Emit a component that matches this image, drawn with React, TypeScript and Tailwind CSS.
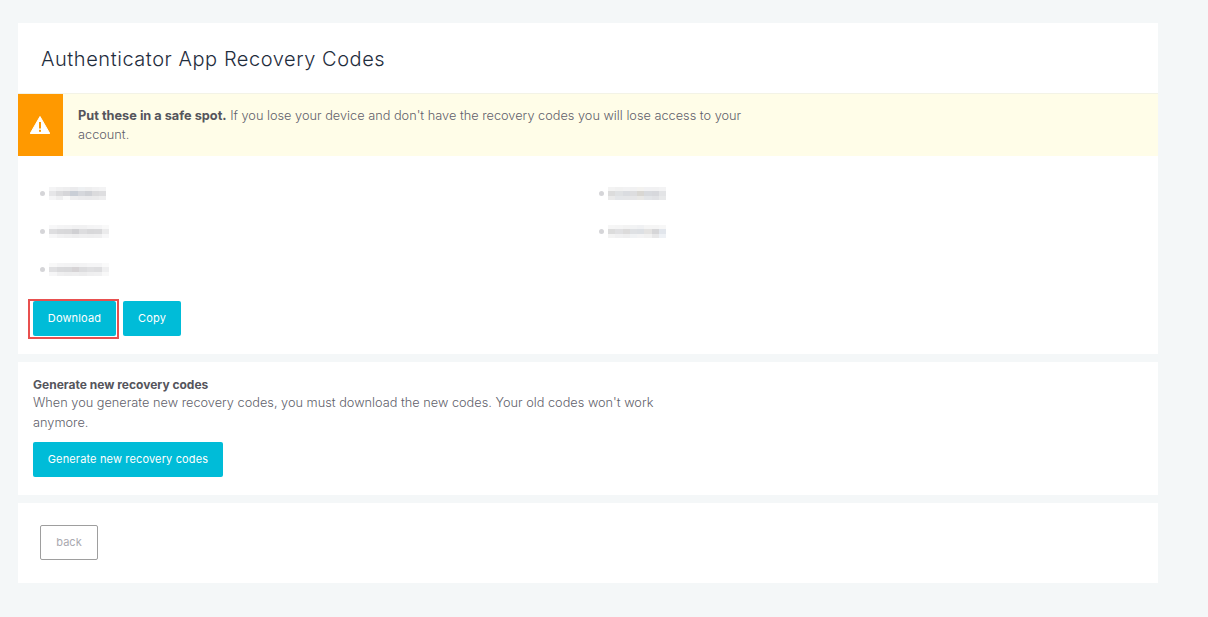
import React from 'react';

// blurred codes from the screenshot: each one is a strip of grey cells
type Code = { top: string[]; mid: string[]; bot: string[] };

const leftCodes: Code[] = [
    { top: ['#f4f4f5', '#f0f0f1', '#eeeeef', '#ebebed', '#eef0f2', '#eeeeef', '#f1f1f2', '#f3f3f4'], mid: ['#e6e6e8', '#dcdcde', '#d6d6d9', '#c9ced6', '#d5d7dc', '#cfd1d6', '#dbdbdd', '#dedee0'], bot: ['#f5f5f6', '#efeff0', '#fafafa', '#eeeeef', '#ebebed', '#eaeaec', '#ebebec', '#eeeeef'] },
    { top: ['#f7f7f8', '#f4f4f5', '#f3f3f4', '#f1f1f2', '#f1f1f2', '#f4f4f5', '#f5f5f6', '#f9f9f9'], mid: ['#dedee0', '#d9d9db', '#d8d8da', '#d0d0d3', '#dddddf', '#d8d8da', '#d9d9db', '#ebebec'], bot: ['#f6f6f7', '#f1f1f2', '#efeff0', '#ededee', '#efeff0', '#eeeeef', '#efeff0', '#f7f7f8'] },
    { top: ['#f8f8f8', '#f4f4f5', '#f3f3f4', '#f2f2f3', '#f3f3f4', '#f5f5f6', '#f5f5f6', '#fafafa'], mid: ['#e0e0e2', '#dadadc', '#d9d9db', '#d6d3d5', '#dcdcde', '#e0e0e2', '#dedee0', '#efeff0'], bot: ['#f6f6f7', '#efeff0', '#ededee', '#eeeeef', '#ececed', '#efeff0', '#f0f0f1', '#f8f8f8'] },
];

const rightCodes: Code[] = [
    { top: ['#f3f3f3', '#f1f1f1', '#f2f2f3', '#f1f1f2', '#f3f2f0', '#f1f1f3', '#f1f1f2', '#f3f3f4'], mid: ['#dcdcdc', '#dfe1e3', '#dadce0', '#dddddf', '#d9d7d3', '#d8dade', '#d7d8dc', '#e3e4e6'], bot: ['#eaeaea', '#e4e6e9', '#e5e6e8', '#e6e6e8', '#e9e8e6', '#e3e5e8', '#e1e2e5', '#e8e9ea'] },
    { top: ['#f6f6f6', '#f5f5f5', '#f3f3f3', '#f2f3f4', '#f0f1f3', '#f5f5f5', '#f5f5f5', '#f7f7f7'], mid: ['#dcdcdc', '#e0e0e2', '#dcdbdb', '#dfe1e4', '#dde0e4', '#e4e3e2', '#d6d6d8', '#e2e6ec'], bot: ['#f3f3f3', '#f0f0f1', '#eeeeef', '#f0f2f4', '#f3f3f4', '#f1f1f1', '#e7e7e8', '#eef1f5'] },
];

function BlurredCode({ code, width }: { code: Code; width: string }) {
    const rows = [code.top, code.mid, code.bot];
    return (
        <div className={`flex flex-col ${width}`}>
            {rows.map((row, i) => (
                <div key={i} className={i === 1 ? 'flex h-[5px]' : 'flex h-1'}>
                    {row.map((color, j) => (
                        <span key={j} className="flex-1" style={{ backgroundColor: color }} />
                    ))}
                </div>
            ))}
        </div>
    );
}

function CodeRow({ code, width }: { code: Code; width: string }) {
    return (
        <li className="flex h-[38px] items-center gap-1">
            <span className="h-[5px] w-[5px] rounded-full bg-[#d5d5d8]" />
            <BlurredCode code={code} width={width} />
        </li>
    );
}

export default function App() {
    return (
        <div className="min-h-[617px] bg-[#f4f7f8] px-[18px] pt-[23px] font-['Inter',sans-serif] text-[12.75px] font-light leading-[19px] text-[#5f5f6b]">
            <div className="flex w-[1140px] flex-col gap-2">
                <section className="h-[331px] bg-white">
                    <h1 className="flex h-[70px] items-center pl-[23px] pt-[2px] text-[20px] font-light tracking-[0.55px] text-[#1f2d3d]">
                        Authenticator App Recovery Codes
                    </h1>
                    <div className="flex h-[63px] border-t border-[#f3f3e6] bg-[#fffde8]">
                        <div className="flex w-[45px] items-center justify-center bg-[#ff9900] pr-[2px]">
                            <svg className="h-[18px] w-5" viewBox="0 0 20 18">
                                <path d="M10 0.5 L19.8 17.5 L0.2 17.5 Z" fill="#fff" stroke="#fff" strokeLinejoin="round" />
                                <rect x="9" y="6" width="2" height="6.5" fill="#ff9900" />
                                <rect x="9" y="13.8" width="2" height="2" fill="#ff9900" />
                            </svg>
                        </div>
                        <p className="w-[690px] pl-[15px] pt-3">
                            <strong className="font-bold text-[#55555c]">Put these in a safe spot.</strong> If you lose your device and don't have the recovery codes you will lose access to your account.
                        </p>
                    </div>
                    <div className="flex pt-[18px]">
                        <ul className="w-[559px] pl-[22px]">
                            <CodeRow code={leftCodes[0]} width="w-[57px]" />
                            <CodeRow code={leftCodes[1]} width="w-[60px]" />
                            <CodeRow code={leftCodes[2]} width="w-[60px]" />
                        </ul>
                        <ul className="pl-[22px]">
                            <CodeRow code={rightCodes[0]} width="w-[58px]" />
                            <CodeRow code={rightCodes[1]} width="w-[58px]" />
                        </ul>
                    </div>
                    <div className="mt-[13px] flex items-center gap-[7px] pl-[15px]">
                        <div className="relative">
                            <button className="h-[35px] w-[83px] rounded-[2px] bg-[#00bcd8] text-[11px] font-normal tracking-[0.15px] text-white">
                                Download
                            </button>
                            {/* red annotation box from the screenshot */}
                            <div className="absolute -left-[5px] -top-[2px] h-[40px] w-[91px] border-2 border-[#e8504f]" />
                        </div>
                        <button className="h-[35px] w-[58px] rounded-[2px] bg-[#00bcd8] text-[11px] font-normal tracking-[0.15px] text-white">
                            Copy
                        </button>
                    </div>
                </section>

                <section className="h-[133px] bg-white px-[15px] pt-[15px]">
                    <h2 className="text-[12px] font-bold leading-[16px] text-[#55555c]">Generate new recovery codes</h2>
                    <p className="w-[640px] leading-[20px]">
                        When you generate new recovery codes, you must download the new codes. Your old codes won't work anymore.
                    </p>
                    <button className="mt-[9px] h-[35px] w-[190px] rounded-[2px] bg-[#00bcd8] text-[11px] font-normal tracking-[0.15px] text-white">
                        Generate new recovery codes
                    </button>
                </section>

                <section className="h-[80px] bg-white pl-[22px] pt-[22px]">
                    <button className="h-[35px] w-[58px] rounded-[2px] border border-[#9e9e9e] text-[11px] font-normal text-[#a9a9b0]">
                        back
                    </button>
                </section>
            </div>
        </div>
    );
}
